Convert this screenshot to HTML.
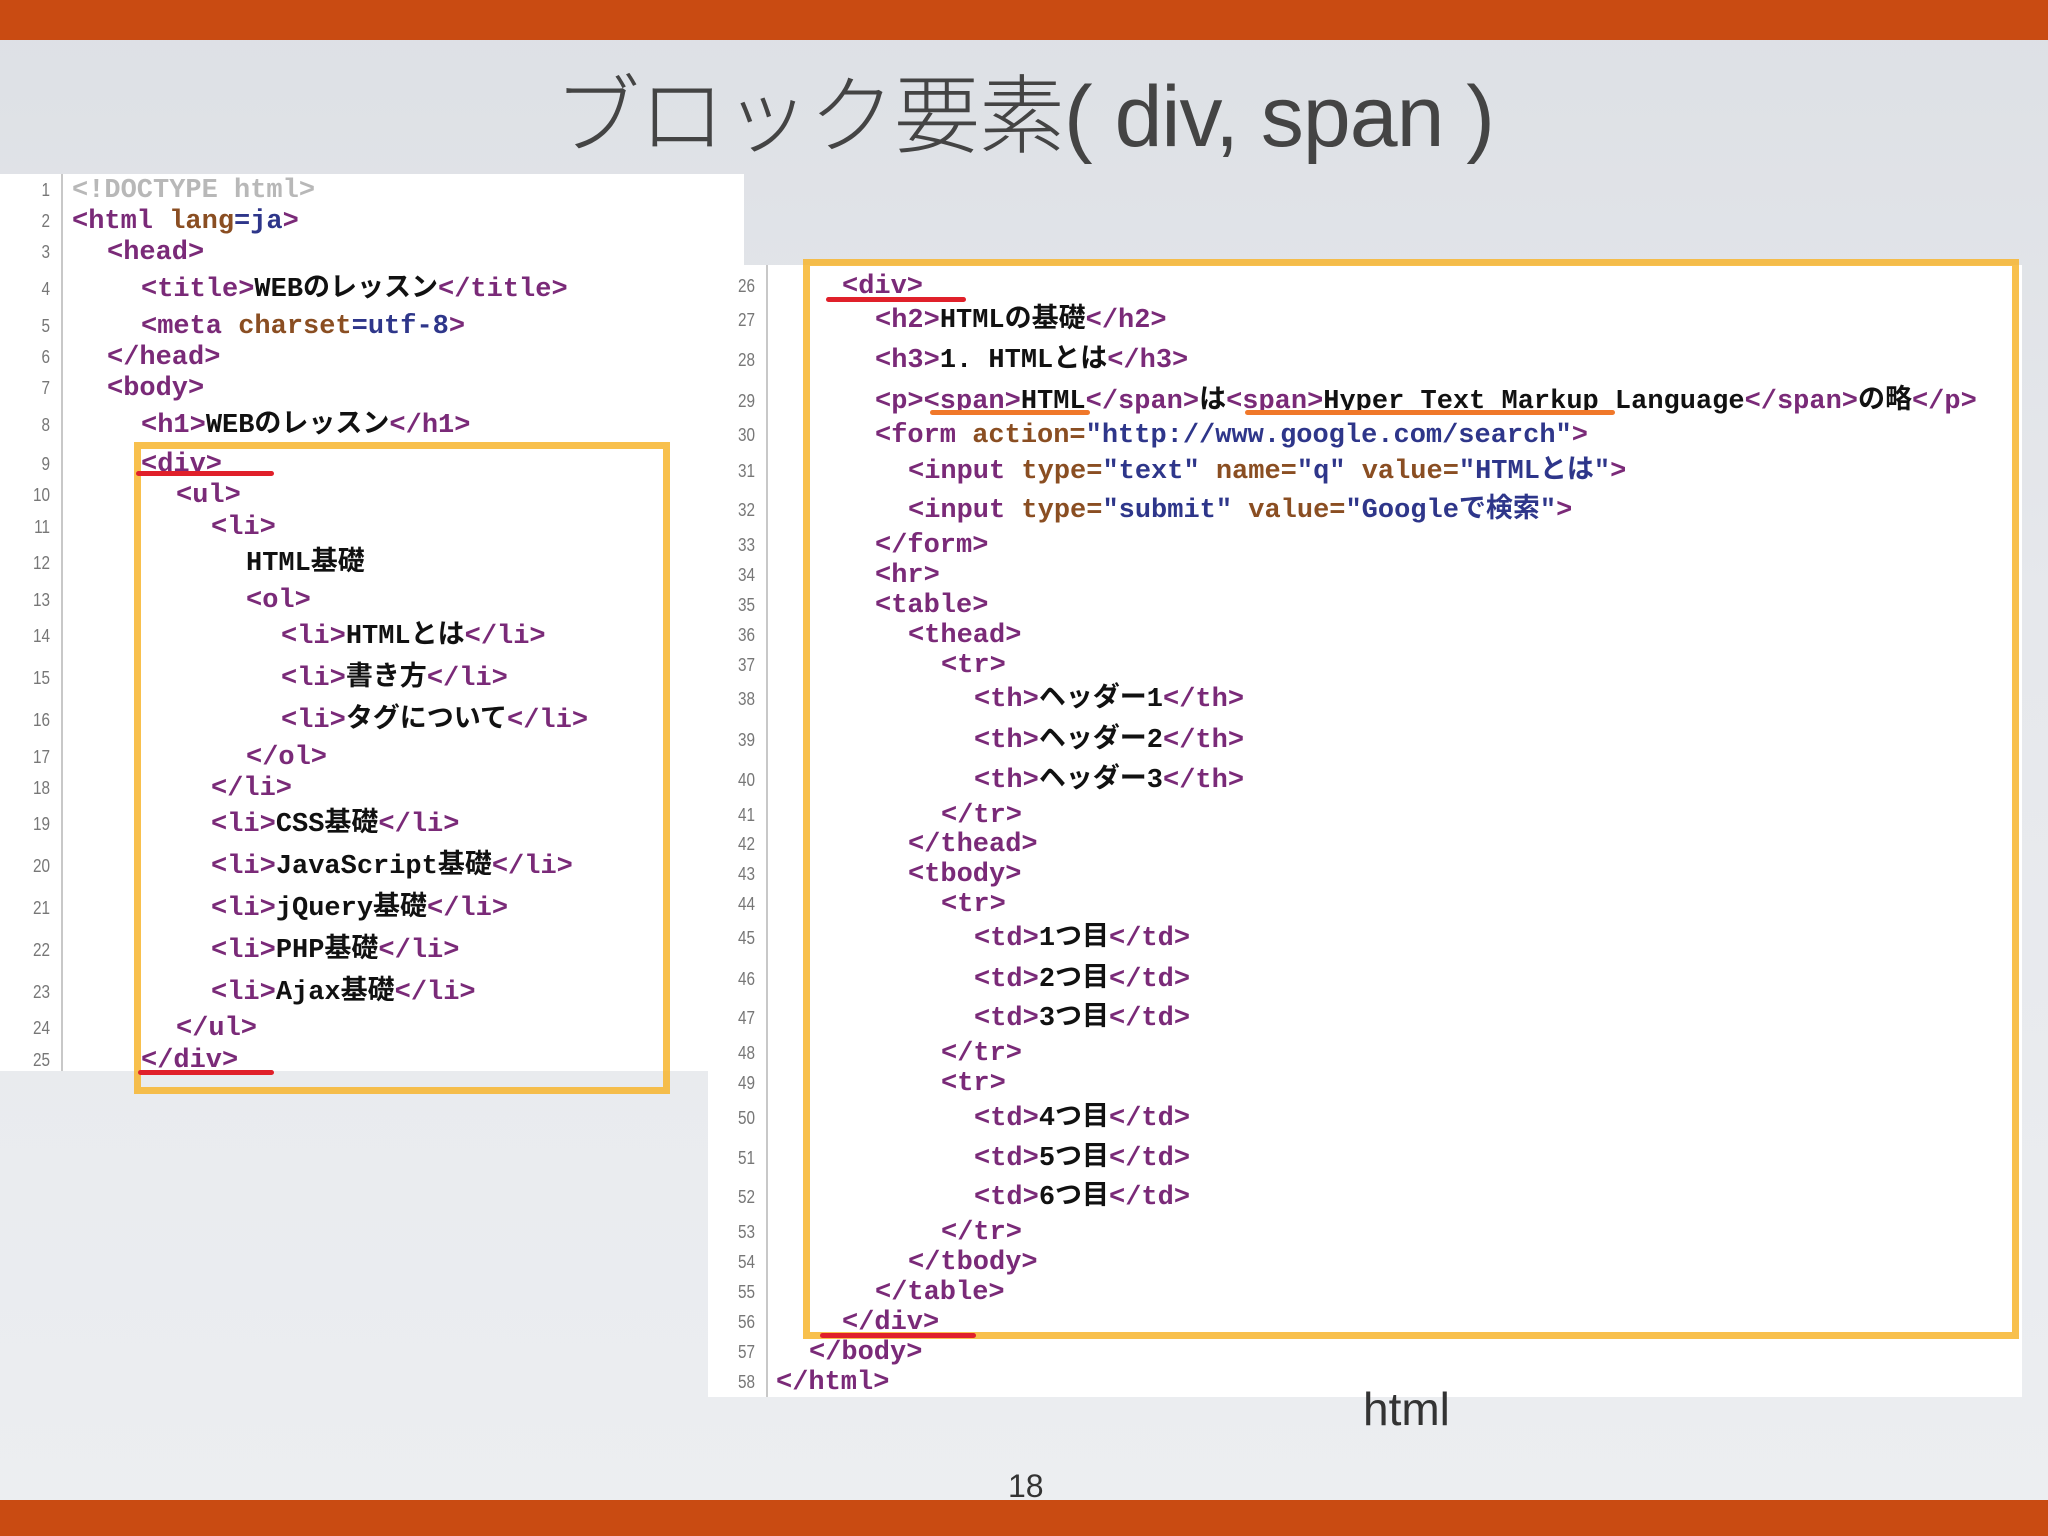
<!DOCTYPE html>
<html><head><meta charset="utf-8"><style>
*{margin:0;padding:0;box-sizing:border-box}
body{width:2048px;height:1536px;overflow:hidden;position:relative;background:linear-gradient(#dde0e5,#e6e8ec 40%,#eceef1);font-family:"Liberation Sans","Noto Sans CJK JP",sans-serif}
.bar{position:absolute;left:0;width:2048px;background:#c94b12}
.title{position:absolute;top:46px;left:0;width:2048px;text-align:center;font-size:86px;color:#444;font-weight:300;letter-spacing:-1px}
.panel{position:absolute;background:#fff}
.gut{position:absolute;top:0;bottom:0;width:2px;background:#c8c8c8}
.ln{position:absolute;font-family:"Liberation Sans",sans-serif;font-size:18px;color:#777;text-align:right;width:40px;line-height:36px;transform:scaleX(.85);transform-origin:right;margin-top:3px}
.c{position:absolute;font-family:"Liberation Mono","Noto Sans CJK JP",monospace;font-size:27px;line-height:36px;white-space:pre;color:#111;font-weight:bold;letter-spacing:0;margin-top:4px}
.t{color:#7a2a78}.a{color:#8a4e22}.v{color:#2e368a}.g{color:#b8b8b8}
.box{position:absolute;border:7px solid #f7b52e;opacity:.85}
.red{position:absolute;height:5px;background:#e0202a;border-radius:3px}
.or{position:absolute;height:5px;background:#f0782a;border-radius:3px}
</style></head><body>
<div class="bar" style="top:0;height:40px"></div>
<div class="bar" style="top:1500px;height:36px"></div>
<div class="title">ブロック要素( div, span )</div>

<div class="panel" style="left:0;top:174px;width:744px;height:897px">
<div class="gut" style="left:61px"></div>
</div>
<div class="panel" style="left:708px;top:265px;width:1314px;height:1132px">
<div class="gut" style="left:58px"></div>
</div>

<div class="ln" style="left:10px;top:169px">1</div>
<div class="ln" style="left:10px;top:200px">2</div>
<div class="ln" style="left:10px;top:231px">3</div>
<div class="ln" style="left:10px;top:268px">4</div>
<div class="ln" style="left:10px;top:305px">5</div>
<div class="ln" style="left:10px;top:336px">6</div>
<div class="ln" style="left:10px;top:367px">7</div>
<div class="ln" style="left:10px;top:404px">8</div>
<div class="ln" style="left:10px;top:443px">9</div>
<div class="ln" style="left:10px;top:474px">10</div>
<div class="ln" style="left:10px;top:506px">11</div>
<div class="ln" style="left:10px;top:542px">12</div>
<div class="ln" style="left:10px;top:579px">13</div>
<div class="ln" style="left:10px;top:615px">14</div>
<div class="ln" style="left:10px;top:657px">15</div>
<div class="ln" style="left:10px;top:699px">16</div>
<div class="ln" style="left:10px;top:736px">17</div>
<div class="ln" style="left:10px;top:767px">18</div>
<div class="ln" style="left:10px;top:803px">19</div>
<div class="ln" style="left:10px;top:845px">20</div>
<div class="ln" style="left:10px;top:887px">21</div>
<div class="ln" style="left:10px;top:929px">22</div>
<div class="ln" style="left:10px;top:971px">23</div>
<div class="ln" style="left:10px;top:1007px">24</div>
<div class="ln" style="left:10px;top:1039px">25</div>

<div class="c g" style="left:72px;top:169px">&lt;!DOCTYPE html&gt;</div>
<div class="c" style="left:72px;top:200px"><span class="t">&lt;html</span> <span class="a">lang</span><span class="v">=ja</span><span class="t">&gt;</span></div>
<div class="c t" style="left:107px;top:231px">&lt;head&gt;</div>
<div class="c" style="left:141px;top:268px"><span class="t">&lt;title&gt;</span>WEBのレッスン<span class="t">&lt;/title&gt;</span></div>
<div class="c" style="left:141px;top:305px"><span class="t">&lt;meta</span> <span class="a">charset</span><span class="v">=utf-8</span><span class="t">&gt;</span></div>
<div class="c t" style="left:107px;top:336px">&lt;/head&gt;</div>
<div class="c t" style="left:107px;top:367px">&lt;body&gt;</div>
<div class="c" style="left:141px;top:404px"><span class="t">&lt;h1&gt;</span>WEBのレッスン<span class="t">&lt;/h1&gt;</span></div>
<div class="c t" style="left:141px;top:443px">&lt;div&gt;</div>
<div class="c t" style="left:176px;top:474px">&lt;ul&gt;</div>
<div class="c t" style="left:211px;top:506px">&lt;li&gt;</div>
<div class="c" style="left:246px;top:542px">HTML基礎</div>
<div class="c t" style="left:246px;top:579px">&lt;ol&gt;</div>
<div class="c" style="left:281px;top:615px"><span class="t">&lt;li&gt;</span>HTMLとは<span class="t">&lt;/li&gt;</span></div>
<div class="c" style="left:281px;top:657px"><span class="t">&lt;li&gt;</span>書き方<span class="t">&lt;/li&gt;</span></div>
<div class="c" style="left:281px;top:699px"><span class="t">&lt;li&gt;</span>タグについて<span class="t">&lt;/li&gt;</span></div>
<div class="c t" style="left:246px;top:736px">&lt;/ol&gt;</div>
<div class="c t" style="left:211px;top:767px">&lt;/li&gt;</div>
<div class="c" style="left:211px;top:803px"><span class="t">&lt;li&gt;</span>CSS基礎<span class="t">&lt;/li&gt;</span></div>
<div class="c" style="left:211px;top:845px"><span class="t">&lt;li&gt;</span>JavaScript基礎<span class="t">&lt;/li&gt;</span></div>
<div class="c" style="left:211px;top:887px"><span class="t">&lt;li&gt;</span>jQuery基礎<span class="t">&lt;/li&gt;</span></div>
<div class="c" style="left:211px;top:929px"><span class="t">&lt;li&gt;</span>PHP基礎<span class="t">&lt;/li&gt;</span></div>
<div class="c" style="left:211px;top:971px"><span class="t">&lt;li&gt;</span>Ajax基礎<span class="t">&lt;/li&gt;</span></div>
<div class="c t" style="left:176px;top:1007px">&lt;/ul&gt;</div>
<div class="c t" style="left:141px;top:1039px">&lt;/div&gt;</div>

<div class="ln" style="left:715px;top:265px">26</div>
<div class="ln" style="left:715px;top:299px">27</div>
<div class="ln" style="left:715px;top:339px">28</div>
<div class="ln" style="left:715px;top:380px">29</div>
<div class="ln" style="left:715px;top:414px">30</div>
<div class="ln" style="left:715px;top:450px">31</div>
<div class="ln" style="left:715px;top:489px">32</div>
<div class="ln" style="left:715px;top:524px">33</div>
<div class="ln" style="left:715px;top:554px">34</div>
<div class="ln" style="left:715px;top:584px">35</div>
<div class="ln" style="left:715px;top:614px">36</div>
<div class="ln" style="left:715px;top:644px">37</div>
<div class="ln" style="left:715px;top:678px">38</div>
<div class="ln" style="left:715px;top:719px">39</div>
<div class="ln" style="left:715px;top:759px">40</div>
<div class="ln" style="left:715px;top:794px">41</div>
<div class="ln" style="left:715px;top:823px">42</div>
<div class="ln" style="left:715px;top:853px">43</div>
<div class="ln" style="left:715px;top:883px">44</div>
<div class="ln" style="left:715px;top:917px">45</div>
<div class="ln" style="left:715px;top:958px">46</div>
<div class="ln" style="left:715px;top:997px">47</div>
<div class="ln" style="left:715px;top:1032px">48</div>
<div class="ln" style="left:715px;top:1062px">49</div>
<div class="ln" style="left:715px;top:1097px">50</div>
<div class="ln" style="left:715px;top:1137px">51</div>
<div class="ln" style="left:715px;top:1176px">52</div>
<div class="ln" style="left:715px;top:1211px">53</div>
<div class="ln" style="left:715px;top:1241px">54</div>
<div class="ln" style="left:715px;top:1271px">55</div>
<div class="ln" style="left:715px;top:1301px">56</div>
<div class="ln" style="left:715px;top:1331px">57</div>
<div class="ln" style="left:715px;top:1361px">58</div>

<div class="c t" style="left:842px;top:265px">&lt;div&gt;</div>
<div class="c" style="left:875px;top:299px"><span class="t">&lt;h2&gt;</span>HTMLの基礎<span class="t">&lt;/h2&gt;</span></div>
<div class="c" style="left:875px;top:339px"><span class="t">&lt;h3&gt;</span>1. HTMLとは<span class="t">&lt;/h3&gt;</span></div>
<div class="c" style="left:875px;top:380px"><span class="t">&lt;p&gt;&lt;span&gt;</span>HTML<span class="t">&lt;/span&gt;</span>は<span class="t">&lt;span&gt;</span>Hyper Text Markup Language<span class="t">&lt;/span&gt;</span>の略<span class="t">&lt;/p&gt;</span></div>
<div class="c" style="left:875px;top:414px"><span class="t">&lt;form</span> <span class="a">action=</span><span class="v">"http://www.google.com/search"</span><span class="t">&gt;</span></div>
<div class="c" style="left:908px;top:450px"><span class="t">&lt;input</span> <span class="a">type=</span><span class="v">"text"</span> <span class="a">name=</span><span class="v">"q"</span> <span class="a">value=</span><span class="v">"HTMLとは"</span><span class="t">&gt;</span></div>
<div class="c" style="left:908px;top:489px"><span class="t">&lt;input</span> <span class="a">type=</span><span class="v">"submit"</span> <span class="a">value=</span><span class="v">"Googleで検索"</span><span class="t">&gt;</span></div>
<div class="c t" style="left:875px;top:524px">&lt;/form&gt;</div>
<div class="c t" style="left:875px;top:554px">&lt;hr&gt;</div>
<div class="c t" style="left:875px;top:584px">&lt;table&gt;</div>
<div class="c t" style="left:908px;top:614px">&lt;thead&gt;</div>
<div class="c t" style="left:941px;top:644px">&lt;tr&gt;</div>
<div class="c" style="left:974px;top:678px"><span class="t">&lt;th&gt;</span>ヘッダー1<span class="t">&lt;/th&gt;</span></div>
<div class="c" style="left:974px;top:719px"><span class="t">&lt;th&gt;</span>ヘッダー2<span class="t">&lt;/th&gt;</span></div>
<div class="c" style="left:974px;top:759px"><span class="t">&lt;th&gt;</span>ヘッダー3<span class="t">&lt;/th&gt;</span></div>
<div class="c t" style="left:941px;top:794px">&lt;/tr&gt;</div>
<div class="c t" style="left:908px;top:823px">&lt;/thead&gt;</div>
<div class="c t" style="left:908px;top:853px">&lt;tbody&gt;</div>
<div class="c t" style="left:941px;top:883px">&lt;tr&gt;</div>
<div class="c" style="left:974px;top:917px"><span class="t">&lt;td&gt;</span>1つ目<span class="t">&lt;/td&gt;</span></div>
<div class="c" style="left:974px;top:958px"><span class="t">&lt;td&gt;</span>2つ目<span class="t">&lt;/td&gt;</span></div>
<div class="c" style="left:974px;top:997px"><span class="t">&lt;td&gt;</span>3つ目<span class="t">&lt;/td&gt;</span></div>
<div class="c t" style="left:941px;top:1032px">&lt;/tr&gt;</div>
<div class="c t" style="left:941px;top:1062px">&lt;tr&gt;</div>
<div class="c" style="left:974px;top:1097px"><span class="t">&lt;td&gt;</span>4つ目<span class="t">&lt;/td&gt;</span></div>
<div class="c" style="left:974px;top:1137px"><span class="t">&lt;td&gt;</span>5つ目<span class="t">&lt;/td&gt;</span></div>
<div class="c" style="left:974px;top:1176px"><span class="t">&lt;td&gt;</span>6つ目<span class="t">&lt;/td&gt;</span></div>
<div class="c t" style="left:941px;top:1211px">&lt;/tr&gt;</div>
<div class="c t" style="left:908px;top:1241px">&lt;/tbody&gt;</div>
<div class="c t" style="left:875px;top:1271px">&lt;/table&gt;</div>
<div class="c t" style="left:842px;top:1301px">&lt;/div&gt;</div>
<div class="c t" style="left:809px;top:1331px">&lt;/body&gt;</div>
<div class="c t" style="left:776px;top:1361px">&lt;/html&gt;</div>

<div class="box" style="left:134px;top:442px;width:536px;height:652px"></div>
<div class="box" style="left:803px;top:259px;width:1216px;height:1080px"></div>
<div class="red" style="left:136px;top:471px;width:138px"></div>
<div class="red" style="left:138px;top:1070px;width:136px"></div>
<div class="red" style="left:826px;top:297px;width:140px"></div>
<div class="red" style="left:820px;top:1333px;width:156px"></div>
<div class="or" style="left:930px;top:410px;width:160px"></div>
<div class="or" style="left:1245px;top:410px;width:370px"></div>

<div style="position:absolute;left:1363px;top:1382px;font-size:46px;color:#333;font-weight:300">html</div>
<div style="position:absolute;left:1008px;top:1468px;font-size:32px;color:#333">18</div>
</body></html>
